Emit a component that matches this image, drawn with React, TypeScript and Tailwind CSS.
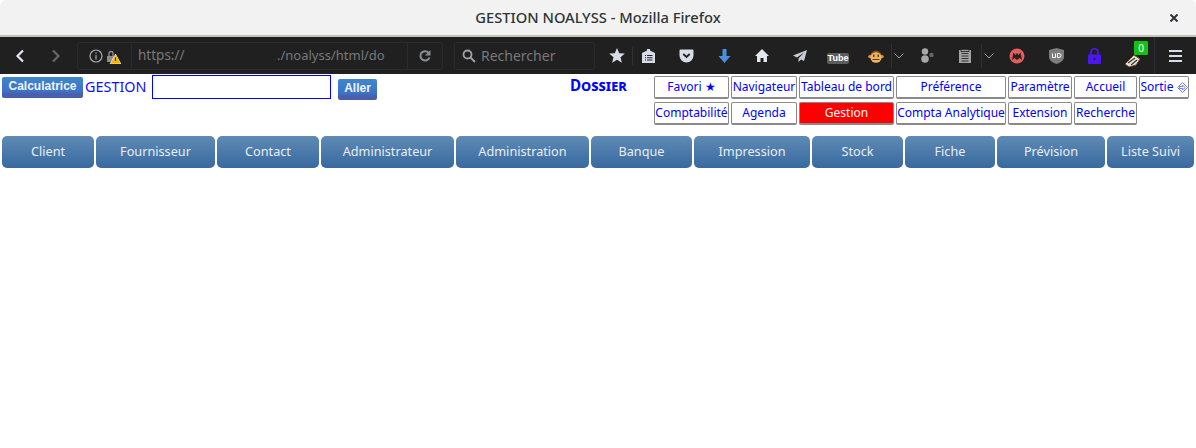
import React from 'react';

const row1 = [
  { label: 'Favori ★' },
  { label: 'Navigateur' },
  { label: 'Tableau de bord' },
  { label: 'Préférence' },
  { label: 'Paramètre' },
  { label: 'Accueil' },
  { label: 'Sortie', exit: true },
];

const row2 = [
  { label: 'Comptabilité' },
  { label: 'Agenda' },
  { label: 'Gestion', active: true },
  { label: 'Compta Analytique' },
  { label: 'Extension' },
  { label: 'Recherche' },
];

const tabs = ['Client', 'Fournisseur', 'Contact', 'Administrateur', 'Administration', 'Banque', 'Impression', 'Stock', 'Fiche', 'Prévision', 'Liste Suivi'];

function MenuCell({ label, active, exit }: { label: string; active?: boolean; exit?: boolean }) {
  return (
    <div
      className={`flex items-center justify-center whitespace-nowrap rounded-[2px] border border-[#8a8a8a] border-b-2 text-[12px] leading-none ${
        active ? 'bg-[#ff0000] text-white' : 'bg-white text-[#0000ff]'
      }`}
    >
      {label}
      {exit && (
        <svg className="ml-[3px]" width="11" height="11" viewBox="0 0 11 11" fill="none" stroke="#6f7ff0" strokeWidth="1">
          <path d="M5.5 .5 10.5 5.5 5.5 10.5 .5 5.5Z" />
          <path d="M2.5 4.5H5.5V3L8 5.5 5.5 8V6.5H2.5Z" />
        </svg>
      )}
    </div>
  );
}

function Browser() {
  return (
    <div className="font-['Noto_Sans',sans-serif]">
      <div className="relative flex h-[37px] items-center justify-center rounded-t-[6px] border-b-2 border-[#c4c4bc] bg-[#f2f2f2] text-[14.7px] font-medium text-[#2e3436]">
        GESTION NOALYSS - Mozilla Firefox
        <svg className="absolute right-[18px] top-[14px]" width="8" height="8" viewBox="0 0 8 8" stroke="#2e3436" strokeWidth="2">
          <path d="M.5 .5 7.5 7.5M7.5 .5 .5 7.5" />
        </svg>
      </div>
      <div className="flex h-[37px] items-center bg-[#202020] text-[14px] text-[#77797c]">
        <div className="flex w-[77px] shrink-0 items-center pl-[15px]">
          <svg width="10" height="14" viewBox="0 0 10 14" fill="none" stroke="#e3e6ec" strokeWidth="2.2">
            <path d="M8 1.5 2.5 7 8 12.5" />
          </svg>
          <svg className="ml-[26px]" width="10" height="14" viewBox="0 0 10 14" fill="none" stroke="#65676a" strokeWidth="2.2">
            <path d="M2 1.5 7.5 7 2 12.5" />
          </svg>
        </div>
        <div className="flex h-[28px] w-[331px] shrink-0 items-center rounded-l-[3px] border border-[#2b2b2b]">
          <div className="flex h-full w-[54px] shrink-0 items-center gap-[3px] border-r border-[#2b2b2b] pl-[11px]">
            <svg width="14" height="14" viewBox="0 0 14 14" fill="none" stroke="#a9abae" strokeWidth="1.2">
              <circle cx="7" cy="7" r="6" />
              <path d="M7 6V10.5M7 3.4V4.8" />
            </svg>
            <span className="relative h-[14px] w-[15px]">
              <svg width="15" height="15" viewBox="0 0 15 15">
                <path d="M1 7H9V13H1Z" fill="#8a8c8f" />
                <path d="M3 7V4.5A2 2 0 0 1 7 4.5V7" fill="none" stroke="#8a8c8f" strokeWidth="1.4" />
                <path d="M9.5 5 15 15H4Z" fill="#f5b400" stroke="#fff" strokeWidth=".6" />
                <path d="M9.5 8.5V12" stroke="#222" strokeWidth="1" />
              </svg>
            </span>
          </div>
          <span className="ml-[6px] w-[139px] text-[13.5px]">https://</span>
          <span className="text-[13px]">./noalyss/html/do</span>
        </div>
        <div className="flex h-[28px] w-[35px] shrink-0 items-center justify-center rounded-r-[3px] border border-l-0 border-[#2b2b2b]">
          <svg width="14" height="14" viewBox="0 0 14 14" fill="none" stroke="#8b8d90" strokeWidth="2">
            <path d="M11.5 8.5A4.7 4.7 0 1 1 10.5 3.6" />
            <path d="M12.5 1V6.5H7Z" fill="#8b8d90" stroke="none" />
          </svg>
        </div>
        <div className="ml-[11px] flex h-[28px] w-[141px] shrink-0 items-center gap-[5px] rounded-[3px] border border-[#2b2b2b] pl-[7px]">
          <svg width="14" height="14" viewBox="0 0 14 14" fill="none" stroke="#a0a2a5" strokeWidth="1.8">
            <circle cx="5.5" cy="5.5" r="4" />
            <path d="M8.5 8.5 13 13" />
          </svg>
          Rechercher
        </div>
        <div className="flex w-[37px] shrink-0 justify-center pl-[7px]">
          <svg width="16" height="15" viewBox="0 0 16 15" fill="#d7dce6">
            <path d="M8 0 10.2 5.2 15.8 5.6 11.5 9.2 12.9 14.7 8 11.8 3.1 14.7 4.5 9.2 .2 5.6 5.8 5.2Z" />
          </svg>
        </div>
        <div className="h-[18px] w-px shrink-0 bg-[#303030]" />
        <div className="flex w-[34px] shrink-0 justify-center pr-[4px]">
          <svg width="13" height="14" viewBox="0 0 13 14" fill="#d7dce6">
            <path d="M5 1.5V0H8V1.5L13 4V14H0V4Z" />
            <path d="M3 6.5H4M5 6.5H10.5M3 8.8H4M5 8.8H10.5M3 11H4M5 11H10.5" stroke="#202020" strokeWidth="1.1" />
          </svg>
        </div>
        <div className="flex w-[38px] shrink-0 justify-center">
          <svg width="15" height="14" viewBox="0 0 15 14" fill="#d7dce6">
            <path d="M1.5 .5H13.5A1 1 0 0 1 14.5 1.5V6.5A7 7 0 0 1 .5 6.5V1.5A1 1 0 0 1 1.5 .5Z" />
            <path d="M4.3 5 7.5 8 10.7 5" fill="none" stroke="#202020" strokeWidth="1.8" />
          </svg>
        </div>
        <div className="flex w-[38px] shrink-0 justify-center">
          <svg width="13" height="14" viewBox="0 0 13 14" fill="#4a90e2">
            <path d="M4.5 0H8.5V7H12.5L6.5 14 .5 7H4.5Z" />
          </svg>
        </div>
        <div className="flex w-[38px] shrink-0 justify-center">
          <svg width="14" height="13" viewBox="0 0 14 13" fill="#e3e6ec">
            <path d="M7 0 14 7H12V13H8.5V9H5.5V13H2V7H0Z" />
          </svg>
        </div>
        <div className="flex w-[38px] shrink-0 justify-center">
          <svg width="14" height="12" viewBox="0 0 14 12" fill="#c9ccd2">
            <path d="M14 0 0 5.5 4 7.5 11 2.5 5.5 8.5V12L8 9.5 11 11Z" />
          </svg>
        </div>
        <div className="flex w-[38px] shrink-0 justify-center pt-[5px]">
          <span className="rounded-[2px] bg-[#5c5c5c] px-[1px] font-['Liberation_Sans',sans-serif] text-[9px] font-bold leading-[11px] text-white">Tube</span>
        </div>
        <div className="flex w-[34px] shrink-0 justify-center pl-[4px]">
          <svg width="16" height="15" viewBox="0 0 16 15">
            <path d="M2 9A6 6.5 0 0 1 14 9Z" fill="#8a4f17" />
            <circle cx="1.8" cy="8.5" r="1.6" fill="#d9954a" />
            <circle cx="14.2" cy="8.5" r="1.6" fill="#d9954a" />
            <ellipse cx="8" cy="9.5" rx="5.6" ry="5.2" fill="#f5b360" />
            <path d="M5 6.5H6.5V9H5ZM9.5 6.5H11V9H9.5Z" fill="#245b24" />
            <path d="M4.5 11.5H11.5" stroke="#6a3a10" strokeWidth="1" />
          </svg>
        </div>
        <div className="flex h-[24px] w-[14px] shrink-0 items-center justify-center border-l border-[#303030]">
          <svg width="10" height="6" viewBox="0 0 10 6" fill="none" stroke="#9a9c9f">
            <path d="M.5 .5 5 5 9.5 .5" />
          </svg>
        </div>
        <div className="flex w-[44px] shrink-0 justify-center">
          <svg width="14" height="15" viewBox="0 0 14 15" fill="#a8a8a8">
            <circle cx="5" cy="3.5" r="3.2" />
            <circle cx="5" cy="11" r="3.8" />
            <circle cx="11.5" cy="7" r="2.2" fill="#666" />
          </svg>
        </div>
        <div className="flex w-[32px] shrink-0 justify-center">
          <svg width="12" height="14" viewBox="0 0 12 14" fill="#a3a3a3">
            <path d="M0 1H12V14H0Z" />
            <path d="M2 .5H10V2.5H2ZM2.5 4.5H9.5M2.5 7H9.5M2.5 9.5H9.5M2.5 12H9.5" stroke="#333" strokeWidth="1" />
          </svg>
        </div>
        <div className="flex h-[24px] w-[14px] shrink-0 items-center justify-center border-l border-[#303030]">
          <svg width="10" height="6" viewBox="0 0 10 6" fill="none" stroke="#9a9c9f">
            <path d="M.5 .5 5 5 9.5 .5" />
          </svg>
        </div>
        <div className="flex w-[44px] shrink-0 justify-center">
          <svg width="16" height="16" viewBox="0 0 16 16">
            <circle cx="8" cy="8" r="7.5" fill="#e35d5d" />
            <path d="M3 12 4.5 4.5 6.5 7 8 5 9.5 7 11.5 4.5 13 12 10.5 10 8 12 5.5 10Z" fill="#2a2020" />
          </svg>
        </div>
        <div className="flex w-[34px] shrink-0 justify-center">
          <svg width="15" height="16" viewBox="0 0 15 16">
            <path d="M7.5 0 15 2V9C15 12.5 11 15 7.5 16 4 15 0 12.5 0 9V2Z" fill="#7c7c7c" />
            <path d="M3.5 5.5V9.5H6.5V5.5M8.5 5.5V9.5H10A2 2 0 0 0 10 5.5Z" fill="none" stroke="#fff" strokeWidth="1" />
          </svg>
        </div>
        <div className="flex w-[42px] shrink-0 justify-center">
          <svg width="13" height="16" viewBox="0 0 13 16">
            <path d="M3 7V4.2A3.5 3.5 0 0 1 10 4.2V7" fill="none" stroke="#4a18ee" strokeWidth="1.8" />
            <path d="M1 6.5H12A1 1 0 0 1 13 7.5V15A1 1 0 0 1 12 16H1A1 1 0 0 1 0 15V7.5A1 1 0 0 1 1 6.5Z" fill="#4a18ee" />
            <circle cx="6.5" cy="11" r="1.2" fill="#25127a" />
          </svg>
        </div>
        <div className="relative flex h-[37px] w-[39px] shrink-0 items-center pl-[9px] pt-[10px]">
          <svg width="17" height="13" viewBox="0 0 17 13">
            <path d="M1 10 10 1 16 5 12 11 5 13Z" fill="#e9e2d6" stroke="#7c4a22" strokeWidth="1" />
            <path d="M4 9 11 4M7 11 13 6" stroke="#333" strokeWidth="1.2" />
          </svg>
          <span className="absolute left-[19px] top-[4px] flex h-[14px] w-[14px] items-center justify-center rounded-[1px] bg-[#12c312] text-[10px] leading-none text-white">0</span>
        </div>
        <div className="flex h-[37px] flex-1 items-center justify-center border-l border-[#2d2d33]">
          <svg width="13" height="12" viewBox="0 0 13 12" fill="#d7dce6">
            <path d="M0 0H13V2H0ZM0 5H13V7H0ZM0 10H13V12H0Z" />
          </svg>
        </div>
      </div>
    </div>
  );
}

export default function App() {
  return (
    <div className="min-h-[448px] bg-white">
      <Browser />
      <div className="flex h-[62px] items-start pl-[2px] font-['Noto_Sans',sans-serif]">
        <button className="mt-[3px] h-[21px] w-[81px] shrink-0 rounded-[2px] bg-[linear-gradient(#3f86cc,#3b72c6_70%,#4a5eae_80%)] pb-[3px] font-['Liberation_Sans',sans-serif] text-[12px] font-bold leading-none text-[#f0f4fa]">
          Calculatrice
        </button>
        <span className="mt-[3px] ml-[2px] w-[67px] shrink-0 text-[14.4px] leading-[20px] text-[#1010ff]">GESTION</span>
        <input className="mt-[1px] h-[24px] w-[179px] shrink-0 border border-[#0000ff] bg-white" />
        <button className="mt-[5px] ml-[7px] h-[21px] w-[39px] shrink-0 rounded-[2px] bg-[linear-gradient(#3f86cc,#3b72c6_70%,#4a5eae_80%)] pb-[3px] font-['Liberation_Sans',sans-serif] text-[12px] font-bold leading-none text-[#f0f4fa]">
          Aller
        </button>
        <span className="mt-[1px] ml-[193px] w-[84px] shrink-0 text-[15.2px] font-bold leading-[20px] text-[#0000ff] [font-variant:small-caps]">Dossier</span>
        <div className="mt-[2px] grid h-[48px] w-[535px] shrink-0 grid-cols-[75px_66px_95px_110px_64px_63px_50px] grid-rows-[23px_23px] gap-x-[2px] gap-y-[3px]">
          {row1.map((item) => (
            <MenuCell key={item.label} {...item} />
          ))}
          {row2.map((item) => (
            <MenuCell key={item.label} {...item} />
          ))}
        </div>
      </div>
      <div className="grid grid-cols-[92px_119px_102px_133px_133px_101px_116px_91px_90px_108px_87px] gap-x-[2px] px-[2px] font-['Noto_Sans',sans-serif]">
        {tabs.map((tab) => (
          <div
            key={tab}
            className="flex h-[32px] items-center justify-center rounded-[5px] bg-[linear-gradient(#5f8ab5,#38699f)] text-[12.7px] text-[#e8eef5]"
          >
            {tab}
          </div>
        ))}
      </div>
    </div>
  );
}
